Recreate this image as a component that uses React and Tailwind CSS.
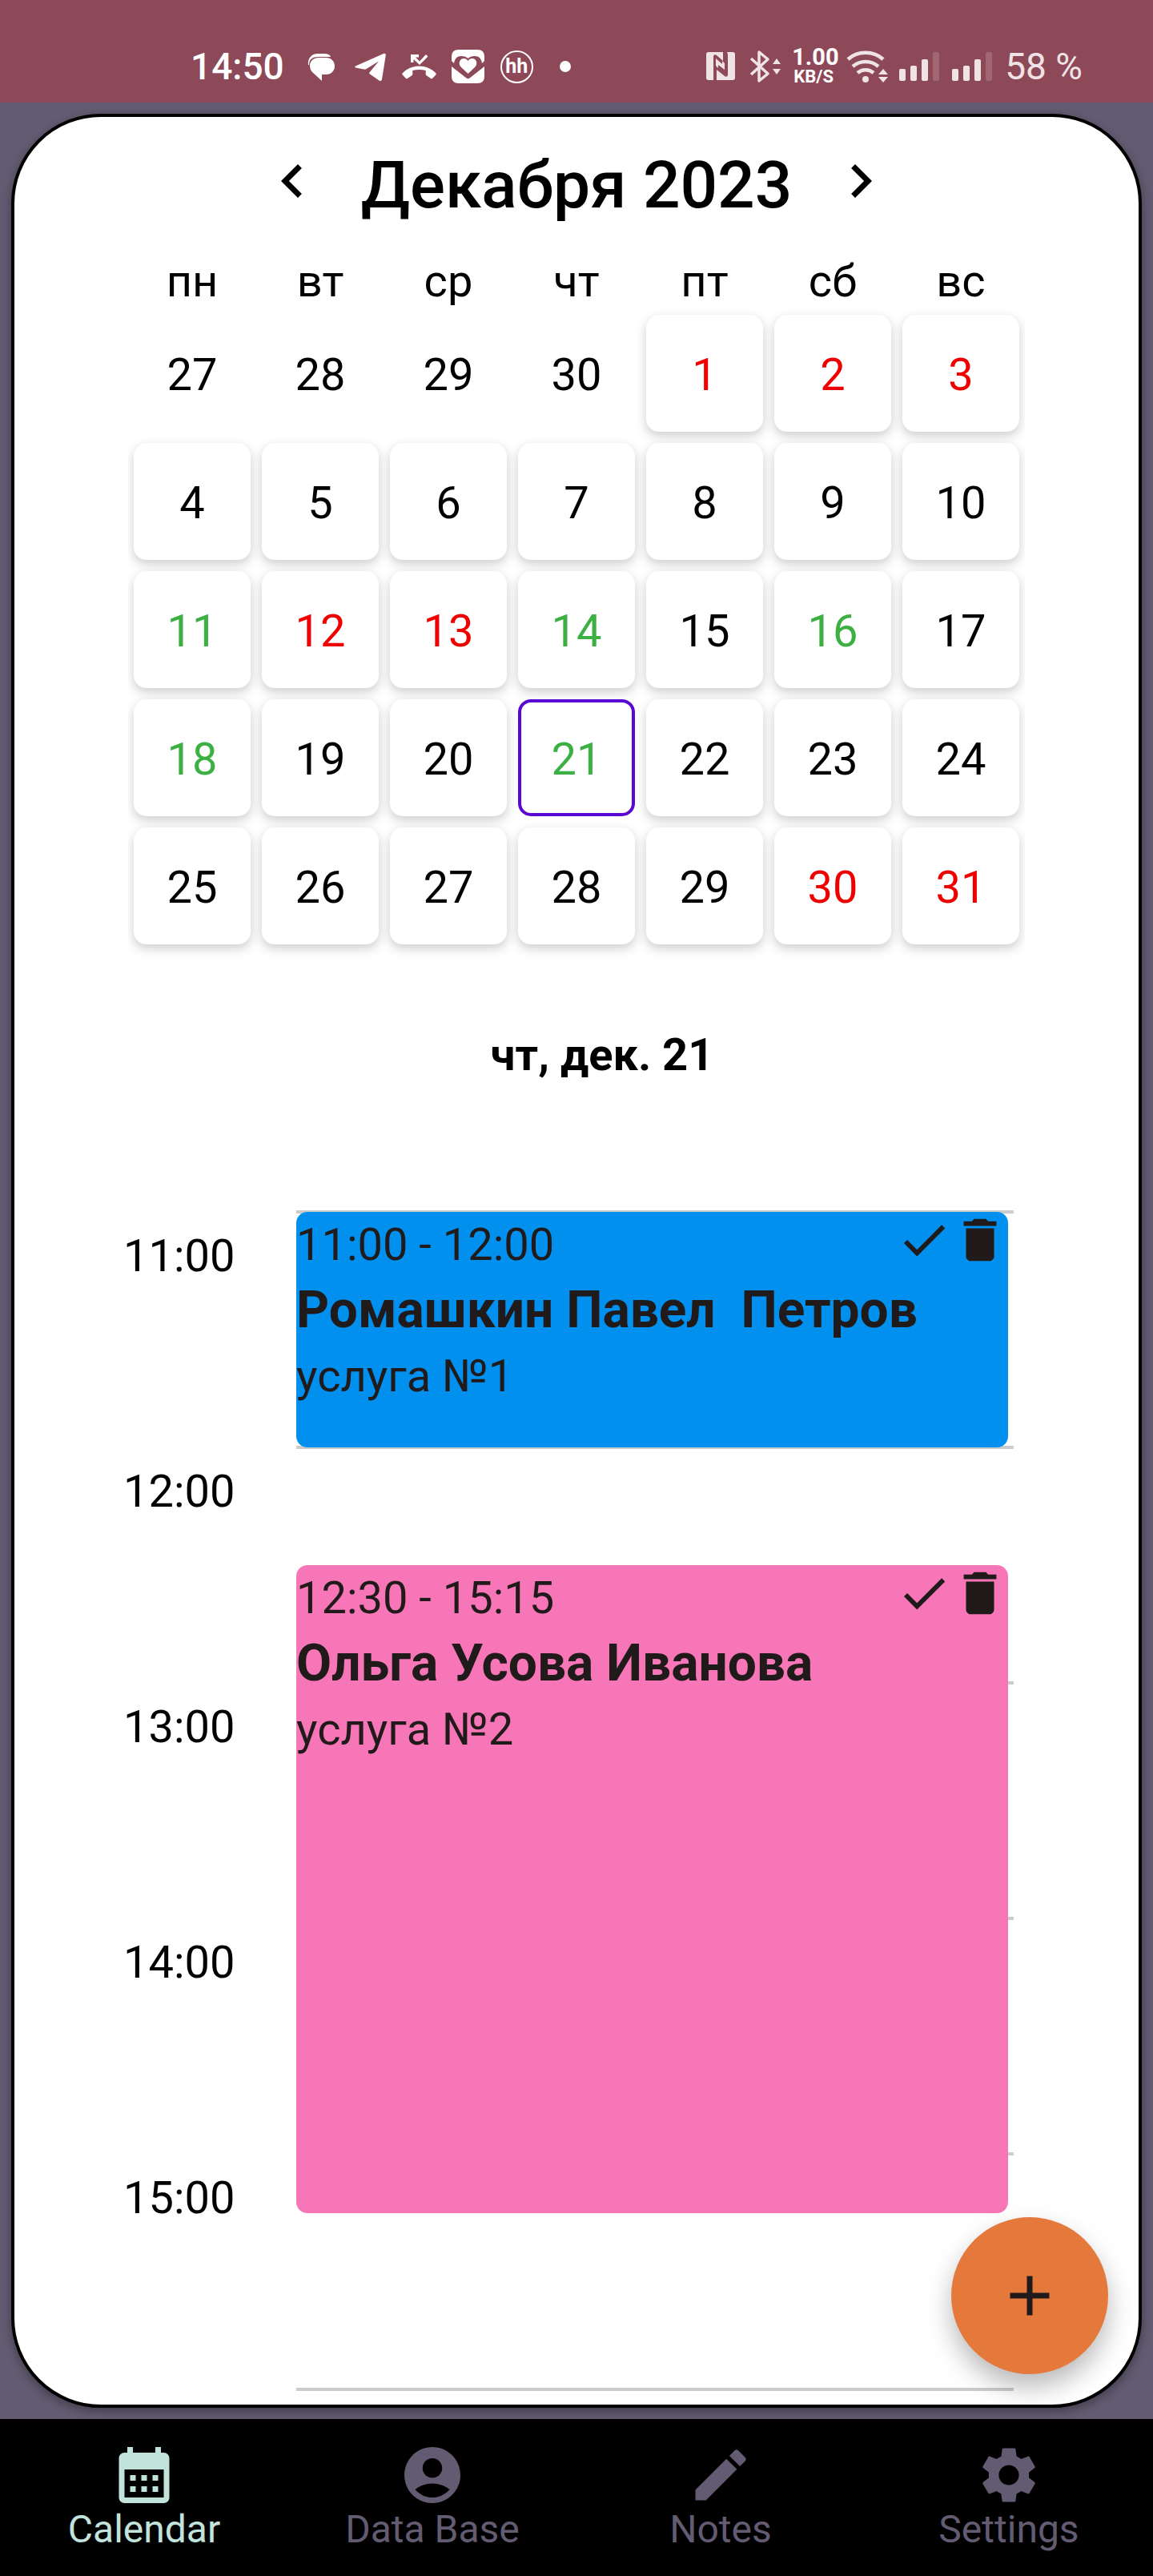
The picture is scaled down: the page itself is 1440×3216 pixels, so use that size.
import React from "react";
import { MdAdd, MdCheck, MdChevronLeft, MdChevronRight, MdDelete, MdEdit, MdSettings, MdCalendarMonth } from "react-icons/md";

const weekdays = ["пн", "вт", "ср", "чт", "пт", "сб", "вс"];

const weeks = [
  [27, 28, 29, 30, 1, 2, 3],
  [4, 5, 6, 7, 8, 9, 10],
  [11, 12, 13, 14, 15, 16, 17],
  [18, 19, 20, 21, 22, 23, 24],
  [25, 26, 27, 28, 29, 30, 31],
];

const busyDays = [1, 2, 3, 12, 13, 30, 31];
const openDays = [11, 14, 16, 18, 21];
const selectedDay = 21;

const hours = ["11:00", "12:00", "13:00", "14:00", "15:00"];
const HOUR_HEIGHT = 294;

const events = [
  { start: 0, end: 60, time: "11:00 - 12:00", name: "Ромашкин Павел  Петров", service: "услуга №1", color: "bg-[#0290ef]" },
  { start: 90, end: 255, time: "12:30 - 15:15", name: "Ольга Усова Иванова", service: "услуга №2", color: "bg-[#f776b7]" },
];

function AccountIcon({ className }) {
  return (
    <svg viewBox="0 0 24 24" fill="currentColor" className={className} aria-hidden="true">
      <path d="M12 2C6.48 2 2 6.48 2 12s4.48 10 10 10 10-4.48 10-10S17.52 2 12 2zm0 4c1.93 0 3.5 1.57 3.5 3.5S13.93 13 12 13s-3.5-1.57-3.5-3.5S10.07 6 12 6zm0 14c-2.03 0-4.43-.82-6.14-2.88C7.55 15.8 9.68 15 12 15s4.45.8 6.14 2.12C16.43 19.18 14.03 20 12 20z" />
    </svg>
  );
}

function SignalIcon() {
  return (
    <svg viewBox="0 0 52 40" className="h-10 w-[52px]" fill="currentColor" aria-hidden="true">
      <rect x="0" y="23" width="8" height="15" rx="2" />
      <rect x="14" y="19" width="8" height="19" rx="2" />
      <rect x="28" y="11" width="8" height="27" rx="2" />
      <rect x="42" y="2" width="8" height="36" rx="2" opacity="0.2" />
    </svg>
  );
}

function StatusBar() {
  return (
    <header className="flex h-32 items-center justify-between bg-[#8d4957] pt-[38px] pr-[88px] pl-[238px] text-white">
      <div className="flex items-center gap-4">
        <span className="mr-2 text-[46px] leading-[56px] font-medium">14:50</span>
        <svg viewBox="0 0 45 45" className="w-[45px]" fill="currentColor" aria-hidden="true">
          <path d="M6 20C5 12 10 6 18 6h7c5 0 8 1 9 4H19C11 10 7 13 7 20z" />
          <path d="M19 11h9c7 0 11 5 11 10.500S35 32 28 32h-5v8L11 29c-2-2-3-5-3-8 0-6 5-10 11-10z" />
        </svg>
        <svg viewBox="0 0 45 45" className="w-[45px]" fill="currentColor" aria-hidden="true">
          <path d="M4 21.500L39 6c1.500-.6 3 .2 2.800 2L37 38c-.4 2-2 2.600-3.600 1.600L22 31.500c-1-.8-1-1.800-.2-2.600L33 15.500 17.500 25c-1 .7-2 .8-3 .5L4 23.500c-1-.4-1-1.500 0-2z" />
        </svg>
        <svg viewBox="0 0 45 45" className="w-[45px]" fill="currentColor" aria-hidden="true">
          <path d="M12 7h10v3.500h-4l5 5L31 7l2.500 2.500L23 20l-7.500-7v4H12z" />
          <path d="M22.500 21.500c8 0 15 3 20.500 8.500 1 1 1 1.600.2 2.400l-4 4.300c-.8.8-1.600.8-2.500.1l-5-3.500c-.8-.6-1-1-1-2V27c-5-1.500-11-1.500-16.400 0v4.300c0 1-.2 1.400-1 2l-5 3.500c-.9.700-1.700.7-2.500-.1l-4-4.300c-.8-.8-.8-1.400.2-2.400 5.500-5.500 12.500-8.500 20.500-8.500z" />
        </svg>
        <svg viewBox="0 0 45 45" className="w-[45px]" fill="currentColor" aria-hidden="true">
          <path d="M11 1h23c6 0 9 3 9 9v5l-3 3c-1-6-4-9-9-9-4 0-6.500 1-8.500 3-2-2-4.500-3-8.500-3-5 0-8 3-9 9l-3-3v-5c0-6 3-9 9-9z" />
          <path d="M22.500 31L14 23c-5-5-1-12 4-11 2 .3 3.500 1.500 4.500 3 1-1.500 2.500-2.700 4.500-3 5-1 9 6 4 11z" />
          <path d="M2 22l18.500 14.500c1.500 1 2.500 1 4 0L43 22v12c0 6-3 9-9 9H11c-6 0-9-3-9-9z" />
        </svg>
        <span className="mx-[2px] flex size-[41px] items-center justify-center rounded-full border-2 border-white text-[25px] leading-[28px] font-bold">hh</span>
        <span className="flex w-[45px] justify-center">
          <span className="size-[14px] rounded-full bg-white" />
        </span>
      </div>
      <div className="flex items-center gap-[14px] text-[#f0e3e6]">
        <svg viewBox="0 0 40 40" className="size-10" fill="currentColor" aria-hidden="true">
          <path d="M3 2h18v11l-8-7c-2-1.500-4-.5-4 2v29H3c-2 0-3-1-3-3V5c0-2 1-3 3-3z" />
          <path d="M26 2h7c2 0 3 1 3 3v29c0 2-1 3-3 3H13V24l10 8c2 1.500 4 .5 4-2V5z" />
          <path d="M12 10l8 7v-4l3 3v8l-8-6v4l-3-3z" />
        </svg>
        <svg viewBox="0 0 39 42" className="w-[39px]" aria-hidden="true">
          <path d="M2 11l21 19-11 9V3l11 9L2 31" fill="none" stroke="currentColor" strokeWidth="3.500" strokeLinejoin="round" />
          <path d="M34 11l5 7H29zM29 24h10l-5 7z" fill="currentColor" />
        </svg>
        <span className="w-[54px] text-center text-[29px] leading-[22px] font-bold text-white">
          1.00
          <br />
          <small className="text-[22px] font-bold">KB/S</small>
        </span>
        <svg viewBox="0 0 52 42" className="w-[52px]" aria-hidden="true">
          <path d="M2 12c12-11 32-11 44 0M8 21c9-8 23-8 32 0M14 29c6-5 14-5 20 0" fill="none" stroke="currentColor" strokeWidth="4.500" />
          <circle cx="24" cy="37" r="4" fill="currentColor" />
          <path d="M46 24l6 7H40zM40 34h12l-6 7z" fill="currentColor" />
        </svg>
        <SignalIcon />
        <SignalIcon />
        <span className="text-[46px] leading-[56px]">58 %</span>
      </div>
    </header>
  );
}

function Day({ value, outside }) {
  const tone = outside ? "text-black" : busyDays.includes(value) ? "text-[#ee0000]" : openDays.includes(value) ? "text-[#3cb043]" : "text-black";
  const frame = outside
    ? ""
    : value === selectedDay
      ? "rounded-2xl border-4 border-[#5a08d6] bg-white"
      : "rounded-2xl bg-white shadow-[0_5px_14px_rgba(0,0,0,0.2)]";
  return <button className={`block h-[146px] w-full pt-1 text-[56px] leading-[80px] ${tone} ${frame}`}>{value}</button>;
}

function MonthCalendar() {
  return (
    <section className="px-[142px]">
      <div className="flex h-[170px] items-center justify-center gap-11">
        <button aria-label="Предыдущий месяц" className="pb-[10px]"><MdChevronLeft className="size-[84px]" /></button>
        <h1 className="text-[82px] leading-[96px] font-medium whitespace-nowrap">Декабря 2023</h1>
        <button aria-label="Следующий месяц" className="pb-[10px]"><MdChevronRight className="size-[84px]" /></button>
      </div>
      <div className="overflow-x-clip">
        <table className="w-full table-fixed border-collapse">
          <thead>
            <tr>
              {weekdays.map((d) => (
                <th key={d} className="h-[70px] p-0 text-[56px] leading-[70px] font-normal">{d}</th>
              ))}
            </tr>
          </thead>
          <tbody>
            {weeks.map((week, row) => (
              <tr key={row}>
                {week.map((d) => (
                  <td key={d} className="p-[7px]"><Day value={d} outside={row === 0 && d > 7} /></td>
                ))}
              </tr>
            ))}
          </tbody>
        </table>
      </div>
    </section>
  );
}

function EventCard({ event }) {
  const top = Math.round((event.start / 60) * HOUR_HEIGHT);
  const height = Math.round(((event.end - event.start) / 60) * HOUR_HEIGHT);
  return (
    <article className={`absolute inset-x-0 rounded-[14px] text-[56px] leading-[82px] text-[#201a1b] ${event.color}`} style={{ top, height }}>
      <div className="flex items-start justify-between">
        <p>{event.time}</p>
        <div className="flex">
          <button aria-label="Выполнено"><MdCheck className="size-[70px]" /></button>
          <button aria-label="Удалить"><MdDelete className="size-[70px]" /></button>
        </div>
      </div>
      <h3 className="text-[64px] leading-[82px] font-bold whitespace-pre">{event.name}</h3>
      <p>{event.service}</p>
    </article>
  );
}

function DaySchedule() {
  return (
    <section>
      <h2 className="mt-[91px] pl-16 text-center text-[56px] leading-[80px] font-bold">чт, дек. 21</h2>
      <div className="mt-[154px] flex pr-[156px] pl-[136px]">
        <div className="w-[216px] shrink-0">
          {hours.map((h) => (
            <div key={h} className="h-[294px] pt-[17px] text-[56px] leading-[80px]">{h}</div>
          ))}
        </div>
        <div className="relative flex-1">
          {hours.map((h) => (
            <div key={h} className="h-[294px] border-t-4 border-[#cccccc]" />
          ))}
          <div className="h-5 border-t-4 border-[#cccccc]" />
          <div className="absolute top-[2px] right-[7px] left-0">
            {events.map((e) => (
              <EventCard key={e.time} event={e} />
            ))}
          </div>
        </div>
      </div>
    </section>
  );
}

const tabs = [
  { label: "Calendar", Icon: MdCalendarMonth, active: true },
  { label: "Data Base", Icon: AccountIcon },
  { label: "Notes", Icon: MdEdit },
  { label: "Settings", Icon: MdSettings },
];

export default function App() {
  return (
    <div className="flex min-h-screen flex-col bg-[#635b71] font-['Roboto',sans-serif] text-black">
      <StatusBar />
      <main className="flex flex-1 flex-col p-[14px]">
        <div className="relative flex-1 rounded-[112px] border-4 border-black bg-white shadow-[0_4px_12px_rgba(0,0,0,0.35)]">
          <MonthCalendar />
          <DaySchedule />
          <button aria-label="Добавить" className="absolute right-[38px] bottom-[38px] flex size-[196px] items-center justify-center rounded-full bg-[#e5793c] text-[#201a1b] shadow-[0_16px_32px_rgba(0,0,0,0.28)]">
            <MdAdd className="size-[84px]" />
          </button>
        </div>
      </main>
      <nav className="grid grid-cols-4 bg-black pt-7 pb-8">
        {tabs.map(({ label, Icon, active }) => (
          <a key={label} href="#" className={`flex flex-col items-center text-[48px] leading-[52px] ${active ? "text-[#c2e2dc]" : "text-[#635b71]"}`}>
            <Icon className="size-[84px]" />
            {label}
          </a>
        ))}
      </nav>
    </div>
  );
}
